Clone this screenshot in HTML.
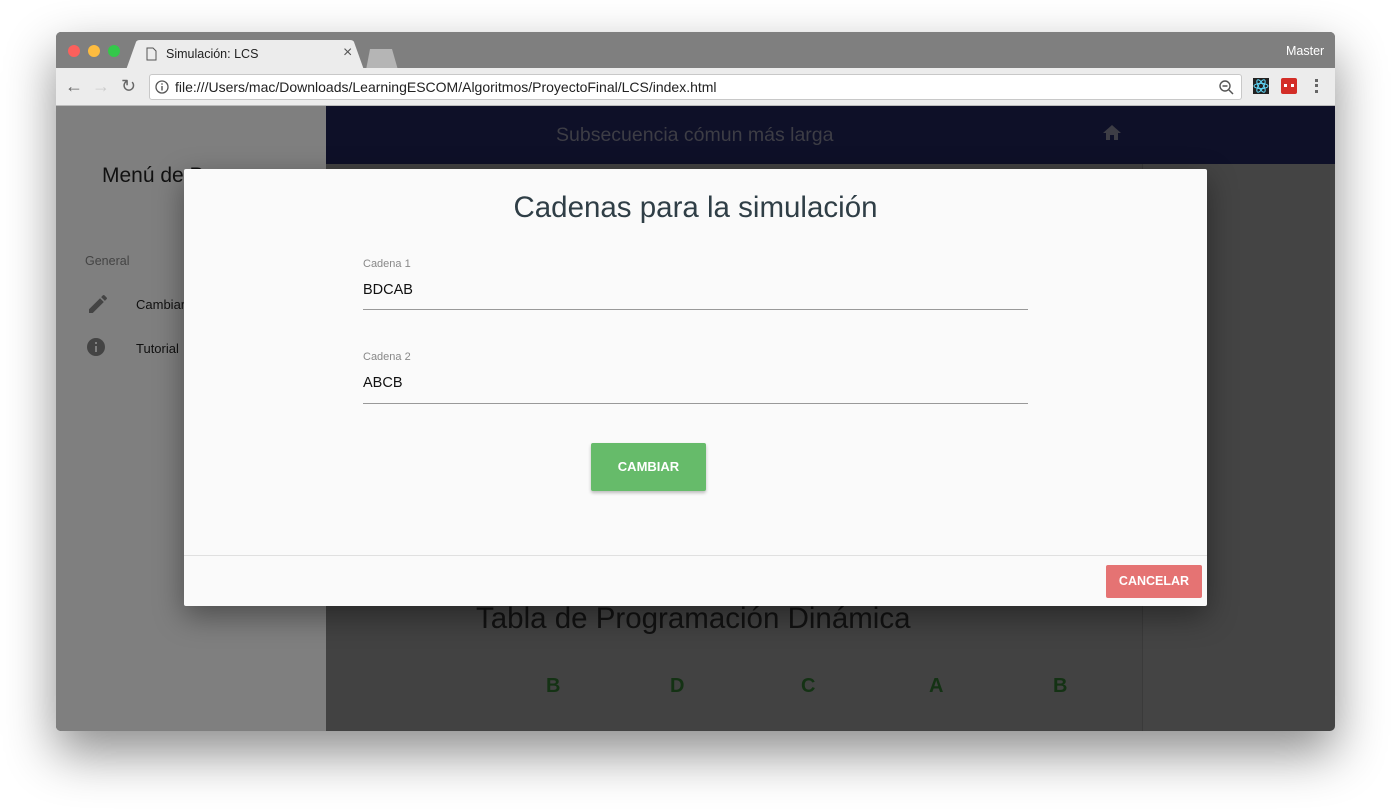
<!DOCTYPE html>
<html><head><meta charset="utf-8"><style>
*{margin:0;padding:0;box-sizing:border-box}
body{width:1391px;height:811px;background:#fff;font-family:"Liberation Sans",sans-serif;position:relative;overflow:hidden}
.a{position:absolute}
</style></head><body>
<div class="a" style="left:56px;top:32px;width:1279px;height:699px;box-shadow:0 22px 50px rgba(0,0,0,.45);border-radius:5px;overflow:hidden;background:#444">
 <div class="a" style="left:0;top:0;width:1279px;height:36px;background:#7f7f7f"></div>
 <div class="a" style="left:12px;top:13px;width:12px;height:12px;border-radius:50%;background:#fc605c"></div>
 <div class="a" style="left:32px;top:13px;width:12px;height:12px;border-radius:50%;background:#fdbc40"></div>
 <div class="a" style="left:52px;top:13px;width:12px;height:12px;border-radius:50%;background:#34c84a"></div>
 <svg class="a" style="left:70px;top:8px" width="280" height="30"><path d="M0 30 L10 2 Q11 0 14 0 L224 0 Q227 0 228 2 L238 30Z" fill="#ececec"/><path d="M240 30 L244 9 L266 9 L272 30Z" fill="#b5b5b5"/></svg>
 <svg class="a" style="left:90px;top:15px" width="11" height="14"><path d="M1 1H7L10 4V13H1Z" fill="none" stroke="#555" stroke-width="1"/></svg>
 <div class="a" style="left:110px;top:15px;font-size:12.5px;color:#222">Simulación: LCS</div>
 <div class="a" style="left:287px;top:12px;font-size:16px;color:#555">×</div>
 <div class="a" style="left:1230px;top:12px;font-size:12.5px;color:#fff">Master</div>
 <div class="a" style="left:0;top:36px;width:1279px;height:38px;background:#ececec;border-bottom:1px solid #bbb"></div>
 <div class="a" style="left:9px;top:44px;font-size:18px;color:#666">←</div>
 <div class="a" style="left:36px;top:44px;font-size:18px;color:#ccc">→</div>
 <div class="a" style="left:65px;top:44px;font-size:18px;color:#666">↻</div>
 <div class="a" style="left:93px;top:42px;width:1093px;height:26px;background:#fff;border:1px solid #c8c8c8;border-radius:3px"></div>
 <svg class="a" style="left:99px;top:48px" width="14" height="14"><circle cx="7" cy="7" r="6" fill="none" stroke="#555" stroke-width="1.3"/><rect x="6.3" y="6" width="1.4" height="4.5" fill="#555"/><rect x="6.3" y="3.3" width="1.4" height="1.4" fill="#555"/></svg>
 <div class="a" style="left:119px;top:47px;font-size:14px;color:#222">file:///Users/mac/Downloads/LearningESCOM/Algoritmos/ProyectoFinal/LCS/index.html</div>
 <svg class="a" style="left:1163px;top:48px" width="16" height="16"><circle cx="6" cy="6" r="5" fill="none" stroke="#555" stroke-width="1.4"/><path d="M3.5 6H8.5M10 10L14 14" stroke="#555" stroke-width="1.5"/></svg>
 <div class="a" style="left:1197px;top:46px;width:16px;height:16px;background:#222"></div>
 <svg class="a" style="left:1197px;top:46px" width="16" height="16"><g fill="none" stroke="#61dafb" stroke-width="1"><ellipse cx="8" cy="8" rx="7" ry="2.6"/><ellipse cx="8" cy="8" rx="7" ry="2.6" transform="rotate(60 8 8)"/><ellipse cx="8" cy="8" rx="7" ry="2.6" transform="rotate(120 8 8)"/></g></svg>
 <div class="a" style="left:1225px;top:46px;width:16px;height:16px;background:#d32d27;border-radius:2px"></div>
 <div class="a" style="left:1228px;top:52px;width:10px;height:3px;border-top:3px dotted #fff"></div>
 <div class="a" style="left:1259px;top:47px;width:3px;height:14px;border-left:3px dotted #666"></div>
 <div class="a" style="left:0;top:74px;width:270px;height:625px;background:#7f7f7f"></div>
 <div class="a" style="left:46px;top:132px;font-size:21px;color:#111">Menú de Pasos</div>
 <div class="a" style="left:29px;top:222px;font-size:12.5px;color:#444">General</div>
 <svg class="a" style="left:30px;top:260px" width="24" height="24"><path d="M3 17.25V21h3.75L17.81 9.94l-3.75-3.75L3 17.25zM20.71 7.04a1 1 0 000-1.41l-2.34-2.34a1 1 0 00-1.41 0l-1.83 1.83 3.75 3.75 1.83-1.83z" fill="#444"/></svg>
 <div class="a" style="left:80px;top:265px;font-size:13px;color:#111">Cambiar cadenas</div>
 <svg class="a" style="left:29px;top:304px" width="22" height="22"><circle cx="11" cy="11" r="9" fill="#444"/><rect x="10" y="10" width="2" height="6" fill="#7f7f7f"/><rect x="10" y="6" width="2" height="2" fill="#7f7f7f"/></svg>
 <div class="a" style="left:80px;top:309px;font-size:13px;color:#111">Tutorial</div>
 <div class="a" style="left:270px;top:74px;width:1009px;height:58px;background:#0e1028"></div>
 <div class="a" style="left:500px;top:92px;font-size:19.5px;color:#3d3d45">Subsecuencia cómun más larga</div>
 <svg class="a" style="left:1047px;top:93px" width="18" height="16"><path d="M7 15V10h4v5h4V8h3L9 0 0 8h3v7z" fill="#3d3d45"/></svg>
 <div class="a" style="left:270px;top:132px;width:817px;height:567px;background:#424242;border-right:1px solid #3a3a3a"></div>
 <div class="a" style="left:420px;top:570px;font-size:29.5px;color:#121212">Tabla de Programación Dinámica</div>
 <div class="a" style="left:490px;top:643px;font-size:20px;font-weight:bold;color:#143214">B</div>
 <div class="a" style="left:614px;top:643px;font-size:20px;font-weight:bold;color:#143214">D</div>
 <div class="a" style="left:745px;top:643px;font-size:20px;font-weight:bold;color:#143214">C</div>
 <div class="a" style="left:873px;top:643px;font-size:20px;font-weight:bold;color:#143214">A</div>
 <div class="a" style="left:997px;top:643px;font-size:20px;font-weight:bold;color:#143214">B</div>
</div>
<div class="a" style="left:184px;top:169px;width:1023px;height:437px;background:#fafafa;box-shadow:0 10px 30px rgba(0,0,0,.4);border-radius:2px">
 <div class="a" style="left:0;top:22px;width:1023px;text-align:center;font-size:29.5px;color:#2f3e46">Cadenas para la simulación</div>
 <div class="a" style="left:179px;top:89px;font-size:11px;color:#888">Cadena 1</div>
 <div class="a" style="left:179px;top:113px;font-size:14.5px;color:#111">BDCAB</div>
 <div class="a" style="left:179px;top:140px;width:665px;height:1px;background:#999"></div>
 <div class="a" style="left:179px;top:182px;font-size:11px;color:#888">Cadena 2</div>
 <div class="a" style="left:179px;top:206px;font-size:14.5px;color:#111">ABCB</div>
 <div class="a" style="left:179px;top:234px;width:665px;height:1px;background:#999"></div>
 <div class="a" style="left:407px;top:274px;width:115px;height:48px;background:#66bb6a;box-shadow:0 2px 3px rgba(0,0,0,.25);border-radius:2px;color:#fff;font-weight:bold;font-size:13px;text-align:center;line-height:48px">CAMBIAR</div>
 <div class="a" style="left:0;top:386px;width:1023px;height:1px;background:#e0e0e0"></div>
 <div class="a" style="left:922px;top:396px;width:96px;height:33px;background:#e57373;border-radius:2px;color:#fff;font-weight:bold;font-size:12.5px;text-align:center;line-height:33px">CANCELAR</div>
</div>
</body></html>
